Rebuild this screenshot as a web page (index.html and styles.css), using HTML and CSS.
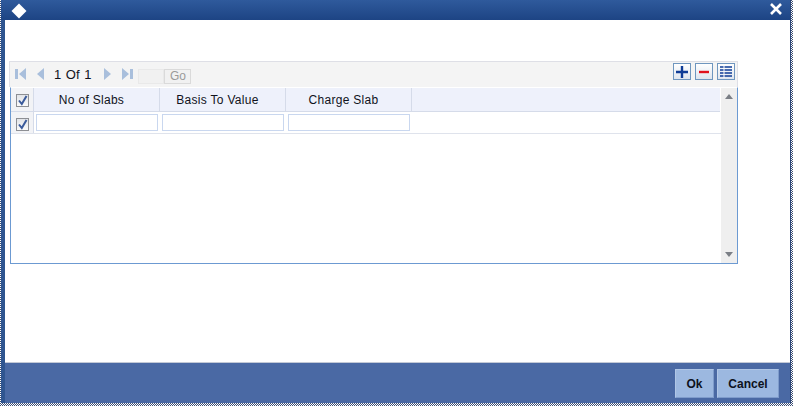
FILE: index.html
```html
<!DOCTYPE html>
<html lang="en">
<head>
    <meta charset="UTF-8">
    <title>Charge Slabs</title>
    <link rel="stylesheet" href="styles.css">
</head>
<body>
    <div class="window">
        <div class="titlebar">
            <svg class="logo" width="18" height="18" viewBox="0 0 18 18"><path d="M9 1.5 16.5 9 9 16.5 1.5 9Z" fill="#fff"/></svg>
            <svg class="close" width="14" height="14" viewBox="0 0 14 14"><path d="M2 2 12 12M12 2 2 12" stroke="#fff" stroke-width="2.6"/></svg>
        </div>
        <div class="content">
            <div class="grid-panel">
                <div class="toolbar">
                    <svg class="nav" width="11" height="12" viewBox="0 0 11 12"><path d="M0 1H3V11H0ZM11 0V12L4 6Z" fill="#a9bfdc"/></svg>
                    <svg class="nav nav-prev" width="8" height="12" viewBox="0 0 8 12"><path d="M8 0V12L1 6Z" fill="#a9bfdc"/></svg>
                    <span class="pager">1 Of 1</span>
                    <svg class="nav nav-next" width="8" height="12" viewBox="0 0 8 12"><path d="M0 0V12L7 6Z" fill="#a9bfdc"/></svg>
                    <svg class="nav nav-last" width="11" height="12" viewBox="0 0 11 12"><path d="M0 0V12L7 6ZM8 1H11V11H8Z" fill="#a9bfdc"/></svg>
                    <input class="page-input" type="text">
                    <button class="go-btn">Go</button>
                    <div class="tools">
                        <div class="tool-btn">
                            <svg width="14" height="14" viewBox="0 0 14 14"><path d="M7 1V13M1 7H13" stroke="#0f3c96" stroke-width="2.4"/></svg>
                        </div>
                        <div class="tool-btn">
                            <svg width="14" height="14" viewBox="0 0 14 14"><path d="M2 7H12" stroke="#e0101c" stroke-width="2.4"/></svg>
                        </div>
                        <div class="tool-btn">
                            <svg width="14" height="14" viewBox="0 0 14 14"><path d="M1 2H13M1 5H13M1 8H13M1 11H13" stroke="#0f3c96" stroke-width="1.6"/><path d="M5 1V13" stroke="#fff" stroke-width="1"/></svg>
                        </div>
                    </div>
                </div>
                <div class="table-box">
                    <div class="table-main">
                        <div class="row head-row">
                            <div class="check-cell">
                                <span class="check"><svg width="11" height="11" viewBox="0 0 11 11"><path d="M2 5.5 4.8 9 9.5 1" fill="none" stroke="#3a5a9b" stroke-width="2"/></svg></span>
                            </div>
                            <div class="head-cell">No of Slabs</div>
                            <div class="head-cell">Basis To Value</div>
                            <div class="head-cell">Charge Slab</div>
                        </div>
                        <div class="row body-row">
                            <div class="check-cell">
                                <span class="check"><svg width="11" height="11" viewBox="0 0 11 11"><path d="M2 5.5 4.8 9 9.5 1" fill="none" stroke="#3a5a9b" stroke-width="2"/></svg></span>
                            </div>
                            <div class="body-cell"><input type="text"></div>
                            <div class="body-cell"><input type="text"></div>
                            <div class="body-cell"><input type="text"></div>
                        </div>
                    </div>
                    <div class="scrollbar">
                        <svg width="8" height="5" viewBox="0 0 8 5"><path d="M4 0 8 5H0Z" fill="#7b7f86"/></svg>
                        <svg width="8" height="5" viewBox="0 0 8 5"><path d="M0 0H8L4 5Z" fill="#7b7f86"/></svg>
                    </div>
                </div>
            </div>
        </div>
        <div class="footer">
            <button class="foot-btn ok-btn">Ok</button>
            <button class="foot-btn cancel-btn">Cancel</button>
        </div>
    </div>
</body>
</html>
```

FILE: styles.css
```css
* {
    margin: 0;
    padding: 0;
    box-sizing: border-box;
    font-family: "Liberation Sans", Arial, sans-serif;
}
html, body {
    width: 793px;
    height: 406px;
    overflow: hidden;
    background: #fff;
}
body {
    background: repeating-conic-gradient(#3c4f76 0 25%, #fff 0 50%) 0 0 / 2px 2px;
}
.window {
    width: 790px;
    height: 403px;
    margin-left: 1px;
    display: flex;
    flex-direction: column;
    background: #2f5590;
    border-right: 1px solid #2d4677;
}
.titlebar {
    height: 20px;
    flex: none;
    display: flex;
    align-items: center;
    justify-content: space-between;
    padding: 0 7px 0 9px;
    background: linear-gradient(#2f5a9c, #1d4484);
}
.logo {
    margin-top: 1px;
}
.close {
    margin-top: -3px;
}
.content {
    flex: 1;
    margin: 0 0 0 4px;
    padding: 41px 0 0 4px;
    background: #fff;
    border-bottom: 1px solid #c3c9d6;
}
.grid-panel {
    width: 729px;
}
.toolbar {
    height: 26px;
    display: flex;
    align-items: flex-start;
    padding: 0 2px 0 5px;
    background: #f4f4f4;
    border: 1px solid #dedfe6;
    border-bottom: none;
}
.nav {
    margin-top: 6px;
}
.nav-prev {
    margin-left: 10px;
}
.pager {
    margin-left: 10px;
    margin-top: 5px;
    font-size: 13px;
    line-height: 15px;
    color: #10131c;
    word-spacing: 1px;
}
.nav-next {
    margin-left: 13px;
}
.nav-last {
    margin-left: 10px;
}
.page-input {
    width: 26px;
    height: 15px;
    margin-left: 5px;
    margin-top: 7px;
    background: #f1f1f1;
    border: 1px solid #e9e9e9;
}
.go-btn {
    width: 27px;
    height: 15px;
    margin-top: 7px;
    font-size: 12px;
    line-height: 13px;
    color: #9a9a9a;
    background: #f1f1f1;
    border: 1px solid #dadada;
}
.tools {
    margin-left: auto;
    margin-top: 1px;
    display: flex;
    gap: 4px;
}
.tool-btn {
    width: 18px;
    height: 17px;
    display: flex;
    align-items: center;
    justify-content: center;
    background: linear-gradient(#fff, #dfe5ee);
    border: 1px solid #6f96bf;
}
.table-box {
    height: 177px;
    margin-left: 1px;
    display: flex;
    background: #fff;
    border: 1px solid #6c9ad2;
    border-top-color: #fff;
}
.table-main {
    flex: 1;
}
.row {
    display: flex;
}
.head-row {
    height: 24px;
    background: #eef1fb;
    border-bottom: 1px solid #d5dbe9;
    margin-right: 1px;
}
.body-row {
    height: 22px;
    border-bottom: 1px solid #dfe3ec;
}
.check-cell {
    width: 23px;
    display: flex;
    justify-content: center;
    padding-top: 6px;
    background: #f2f3f6;
    border-right: 1px solid #d5dbe9;
}
.check {
    width: 13px;
    height: 13px;
    display: flex;
    align-items: center;
    justify-content: center;
    background: linear-gradient(#e2e4e8, #fafafa);
    border: 1px solid #8d8f94;
}
.head-cell {
    width: 126px;
    display: flex;
    align-items: center;
    justify-content: center;
    padding-right: 10px;
    font-size: 12px;
    color: #10131c;
    border-right: 1px solid #d5dbe9;
    letter-spacing: 0.3px;
}
.body-cell {
    width: 126px;
    display: flex;
    align-items: center;
    padding: 0 2px;
}
.body-cell input {
    width: 122px;
    height: 17px;
    background: #fff;
    border: 1px solid #c9d7ef;
}
.scrollbar {
    width: 16px;
    flex: none;
    display: flex;
    flex-direction: column;
    justify-content: space-between;
    align-items: center;
    padding: 6px 0 6px;
    background: #efefef;
}
.footer {
    height: 40px;
    flex: none;
    margin-left: 4px;
    display: flex;
    justify-content: flex-end;
    gap: 3px;
    padding: 6px 11px 0 0;
    background: #4a69a4;
}
.foot-btn {
    height: 29px;
    font-size: 12px;
    font-weight: bold;
    color: #0d1220;
    background: #9cb8e0;
    border: 1px solid #b0c6e6;
    border-right-color: #7f9ccb;
    border-bottom-color: #7f9ccb;
}
.ok-btn {
    width: 39px;
}
.cancel-btn {
    width: 62px;
}
```
